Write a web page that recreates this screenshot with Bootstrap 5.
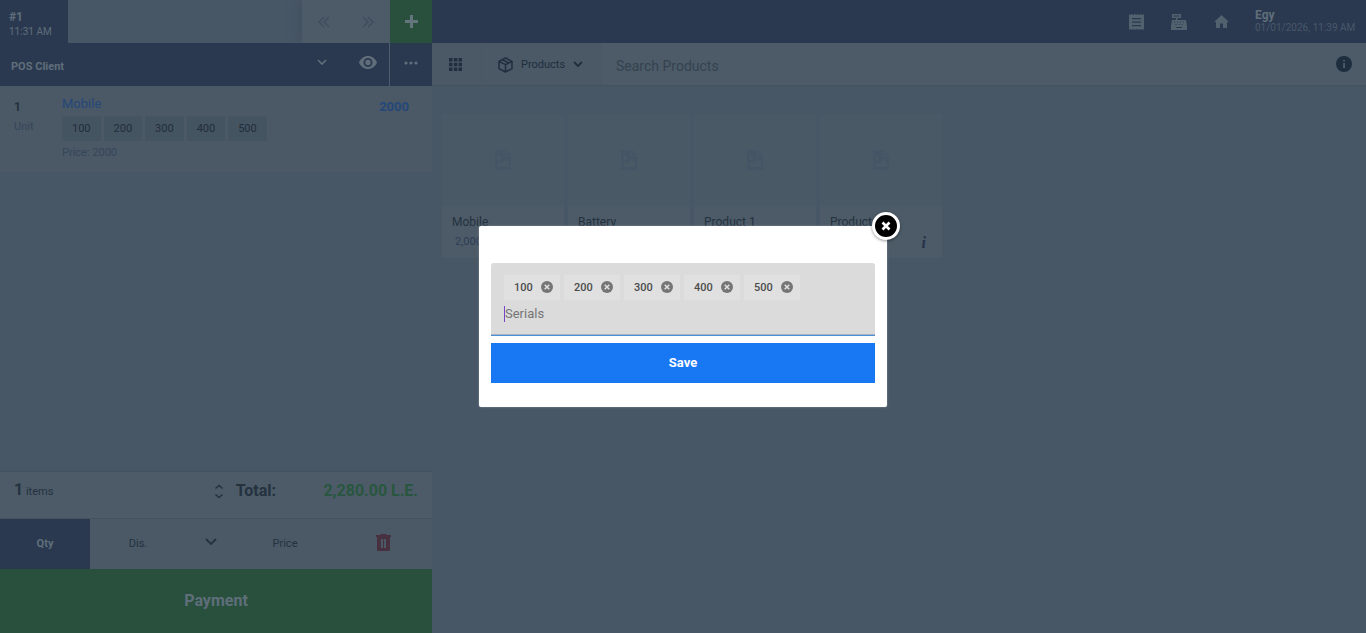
<!DOCTYPE html>
<html lang="en">
<head>
<meta charset="utf-8">
<meta name="viewport" content="width=device-width, initial-scale=1">
<title>POS</title>
<link rel="stylesheet" href="https://cdn.jsdelivr.net/npm/bootstrap@5.3.0/dist/css/bootstrap.min.css">
<style>
  :root {
    --navy: #2b3950;
    --panel: #4c5b67;
    --surface: #4a5965;
    --canvas: #485766;
    --green: #28503d;
    --ink: #243240;
    --soft: #5f6e7a;
    --link: #25477a;
    --line: #43525f;
  }
  body { font-family: Roboto, sans-serif; font-size: 12px; line-height: 16px; color: var(--ink); background: var(--canvas); }
  button { border: 0; background: none; padding: 0; color: inherit; font: inherit; }
  svg { display: block; fill: currentColor; }
  .stroke { fill: none; stroke: currentColor; stroke-width: 2; }
  .bar { height: 43px; flex: none; }
  .navy { background: var(--navy); color: var(--soft); }
  .order { flex: 0 0 27rem; background: var(--canvas); }
  .session { width: 68px; padding: 9px 9px 5px; }
  .session span, .who span { font-size: 10px; line-height: 14px; }
  .pager { width: 88px; background: var(--panel); color: #3e4d5e; box-shadow: -4px 0 8px #43525f; }
  .add { width: 42px; background: var(--green); color: #65757d; }
  .client { border-right: 1px solid #4f5e6d; padding-left: 11px; }
  .client-name { font-size: 11px; }
  .menu-btn { width: 42px; }
  .line-item { background: var(--surface); height: 87px; padding: 8px 23px 0 14px; border-bottom: 1px solid var(--canvas); }
  .qty { width: 48px; padding-top: 5px; }
  .muted { color: #35455a; font-size: 11px; }
  .serials { gap: 3px; }
  .serial { background: #455461; color: #212e3b; font-size: 11px; padding: 5px 10px 4px; }
  .name { height: 22px; font-size: 13px; line-height: 20px; color: var(--link); }
  .amount { font-size: 13px; padding-top: 5px; color: var(--link); }
  .totals { background: var(--panel); height: 48px; border-top: 1px solid var(--line); border-bottom: 1px solid var(--line); padding: 0 14px 8px; font-size: 11px; }
  .big { font-size: 16px; }
  .sum { width: 142px; color: #28563f; }
  .keys { background: var(--surface); height: 50px; font-size: 11px; }
  .key-qty { width: 90px; background: var(--navy); color: var(--soft); }
  .key-dis { width: 96px; }
  .key-type { width: 50px; }
  .key-price { width: 98px; }
  .key-del { color: #47303f; }
  .pay { height: 64px; background: var(--green); color: var(--soft); font-size: 16px; }
  .top-nav { gap: 27px; margin-right: 10px; color: #51616d; }
  .who { width: 127px; padding: 8px 0 0 16px; }
  .who span { color: #485868; white-space: nowrap; }
  .tools { background: var(--panel); border-bottom: 1px solid var(--line); }
  .tile-btn { width: 50px; background: var(--surface); color: #202e3f; border-right: 1px solid var(--canvas); padding-left: 17px; }
  .kind { width: 120px; background: var(--surface); font-size: 11px; padding: 1px 0 0 16px; color: #202e3f; }
  .find { background: transparent; border: 0; outline: 0; font-size: 14px; color: var(--ink); padding: 3px 14px 0; }
  .find::placeholder { color: #35424f; opacity: 1; }
  .about { color: #1e2e3e; padding: 0 14px; }
  .goods { padding: 28px 10px; gap: 4px; }
  .product { width: 122px; background: var(--panel); }
  .thumb { height: 92px; background: #4a5966; color: #465565; }
  .desc { height: 52px; padding: 7px 10px; }
  .desc h2 { font-size: 12px; line-height: 18px; margin: 0; font-weight: 400; }
  .price { font-size: 11px; padding: 3px 0 0 3px; color: #2e3d55; }
  .more { font: italic 700 16px/24px "Liberation Serif", serif; color: #26324a; padding-right: 6px; }
  .overlay { inset: 0; }
  .dialog-box { width: 408px; background: #fff; padding: 37px 12px 24px; border-radius: 2px; box-shadow: 0 0 2px #8d96a0; }
  .close-btn { top: -14px; right: -13px; width: 28px; height: 28px; border-radius: 50%; background: #000; border: 3px solid #fff; color: #fff; box-shadow: 0 1px 3px #0006; }
  .field { background: #dbdbdb; border-bottom: 1px solid #4a8fdc; box-shadow: inset 0 -1px #a9b4c1; border-radius: 3px 3px 0 0; padding: 12px 13px 13px; }
  .chips { gap: 4px; margin-bottom: 6px; }
  .chip { background: #e0e0e0; color: #4c4c4c; font-size: 11px; height: 25px; padding-left: 10px; width: 56px; }
  .chip button { color: #757575; padding: 0 7px 1px 0; }
  .serial-input { border: 0; border-left: 1px solid #7346c8; outline: 0; background: transparent; font-size: 13px; line-height: 16px; height: 16px; padding: 0; display: block; }
  .serial-input::placeholder { color: #757575; opacity: 1; }
  .save { background: #1877f2; color: #fff; height: 40px; font-size: 13px; margin-top: 7px; }
</style>
</head>
<body>
<svg class="d-none">
  <symbol id="noimg" viewBox="0 0 16 20"><path d="M1 0h9v6h6v13a1 1 0 0 1-1 1H1a1 1 0 0 1-1-1V1a1 1 0 0 1 1-1zm10 0 5 5h-5zM3 17h11v-5l-3-3-5 5-2-2-1 1zM4 6a2 2 0 1 0 .1 0z" fill-rule="evenodd"/></symbol>
  <symbol id="chipx" viewBox="0 0 12 12"><circle cx="6" cy="6" r="6"/><path d="m3.700 3.700 4.600 4.600m0-4.600L3.700 8.300" stroke="#e0e0e0" stroke-width="1.500"/></symbol>
</svg>

<div class="d-flex vh-100 overflow-hidden">
  <section class="order d-flex flex-column">
    <div class="bar d-flex">
      <button class="session navy text-start"><b class="d-block lh-1 mb-1">#1</b><span class="d-block lh-1">11:31 AM</span></button>
      <div class="flex-grow-1"></div>
      <div class="pager d-flex">
        <button class="flex-fill d-flex align-items-center justify-content-center" aria-label="Previous"><svg class="stroke" width="12" height="12"><path d="M6 1 1 6l5 5M11 1 6 6l5 5" stroke-width="1.400"/></svg></button>
        <button class="flex-fill d-flex align-items-center justify-content-center" aria-label="Next"><svg class="stroke" width="12" height="12"><path d="m1 1 5 5-5 5M6 1l5 5-5 5" stroke-width="1.400"/></svg></button>
      </div>
      <button class="add d-flex align-items-center justify-content-center" aria-label="Add order"><svg width="13" height="13"><path d="M5 0h3v5h5v3H8v5H5V8H0V5h5z"/></svg></button>
    </div>
    <div class="bar navy d-flex">
      <div class="client flex-grow-1 d-flex align-items-center">
        <b class="client-name flex-grow-1 pt-1">POS Client</b>
        <button class="px-3 me-3 pb-1" aria-label="Choose client"><svg class="stroke" width="10" height="7"><path d="m1 1 4 4 4-4" stroke-width="1.700"/></svg></button>
        <button class="pb-1 pe-2 me-1" aria-label="View client"><svg width="18" height="13"><path fill-rule="evenodd" d="M9 0c4 0 7.300 2.500 9 6.500C16.300 10.500 13 13 9 13S1.700 10.500 0 6.500C1.700 2.500 5 0 9 0zm0 2a4.500 4.500 0 1 0 0 9 4.500 4.500 0 0 0 0-9zm0 1.800a2.700 2.700 0 1 1 0 5.400 2.700 2.700 0 0 1 0-5.400z"/></svg></button>
      </div>
      <button class="menu-btn d-flex align-items-center justify-content-center pb-1" aria-label="More"><svg width="14" height="4"><circle cx="2" cy="2" r="1.600"/><circle cx="7" cy="2" r="1.600"/><circle cx="12" cy="2" r="1.600"/></svg></button>
    </div>
    <article class="line-item d-flex">
      <div class="qty"><b class="d-block">1</b><span class="muted d-block pt-1">Unit</span></div>
      <div class="flex-grow-1">
        <div class="name">Mobile</div>
        <div class="serials d-flex"><span class="serial">100</span><span class="serial">200</span><span class="serial">300</span><span class="serial">400</span><span class="serial">500</span></div>
        <div class="muted pt-1">Price: 2000</div>
      </div>
      <b class="amount">2000</b>
    </article>
    <div class="flex-grow-1"></div>
    <div class="totals d-flex align-items-center">
      <div class="flex-grow-1"><b class="big">1</b> items</div>
      <button class="me-2 pe-1" aria-label="Expand totals"><svg class="stroke" width="10" height="15"><path d="m1.500 4.500 3.500-3 3.500 3M1.500 10.500l3.500 3 3.500-3" stroke-width="1.500"/></svg></button>
      <div class="big fw-bold">Total:</div>
      <div class="sum big fw-bold text-end">2,280.00 L.E.</div>
    </div>
    <div class="keys d-flex">
      <button class="key-qty fw-bold">Qty</button>
      <button class="key-dis">Dis.</button>
      <button class="key-type d-flex align-items-center justify-content-center pb-1" aria-label="Discount type"><svg class="stroke" width="12" height="8"><path d="m1 1 5 5 5-5" stroke-width="1.800"/></svg></button>
      <button class="key-price">Price</button>
      <button class="key-del flex-grow-1 d-flex align-items-center justify-content-center pb-1" aria-label="Delete"><svg width="15" height="17"><path fill-rule="evenodd" d="M5 0h5l1 1h4v2H0V1h4zM1 3h13v13a1 1 0 0 1-1 1H2a1 1 0 0 1-1-1zm4 2v9h2V5zm3 0v9h2V5z"/></svg></button>
    </div>
    <button class="pay fw-bold">Payment</button>
  </section>

  <main class="flex-grow-1 d-flex flex-column">
    <header class="bar navy d-flex justify-content-end">
      <nav class="top-nav d-flex align-items-center">
        <a href="#" class="text-reset" aria-label="Orders"><svg width="15" height="16"><path fill-rule="evenodd" d="m0 0 1.500 1L3 0l1.500 1L6 0l1.500 1L9 0l1.500 1L12 0l1.500 1L15 0v16l-1.500-1-1.500 1-1.500-1L9 16l-1.500-1L6 16l-1.500-1L3 16l-1.500-1L0 16zM3 4v1.200h9V4zm0 3.500v1.200h9V7.500zM3 11v1.200h9V11z"/></svg></a>
        <a href="#" class="text-reset" aria-label="Register"><svg width="16" height="16"><path fill-rule="evenodd" d="M1 0h9v4H6.500v2H15l1 6v4H0v-4l1-6h4V4H1zm1.500 1.500v1h6v-1zM3 7.500v1h1v-1zm3 0v1h1v-1zm3 0v1h1v-1zm3 0v1h1v-1zM4.500 10v1h1v-1zm3 0v1h1v-1zm3 0v1h1v-1zM5 13v1h6v-1z"/></svg></a>
        <a href="#" class="text-reset" aria-label="Home"><svg width="15" height="13"><path d="m7.500 0 7.500 7h-2v6H9V8.500H6V13H2V7H0z"/></svg></a>
      </nav>
      <div class="who"><b class="d-block lh-sm">Egy</b><span class="d-block lh-1">01/01/2026, 11:39 AM</span></div>
    </header>
    <div class="bar tools d-flex">
      <button class="tile-btn" aria-label="Grid view"><svg width="13" height="13"><path d="M0 0h3.500v3.500H0zm4.800 0h3.500v3.500H4.800zm4.700 0H13v3.500H9.500zM0 4.800h3.500v3.500H0zm4.800 0h3.500v3.500H4.800zm4.700 0H13v3.500H9.500zM0 9.500h3.500V13H0zm4.800 0h3.500V13H4.800zm4.700 0H13V13H9.500z"/></svg></button>
      <button class="kind d-flex align-items-center"><svg class="stroke" width="15" height="16" stroke-linejoin="round"><path d="m7.500 1 6.500 3.300v7.400L7.500 15 1 11.700V4.300zM1 4.300l6.500 3.400L14 4.300M7.500 7.700V15M4.200 2.700 10.700 6" stroke-width="1.500"/></svg><span class="ms-2">Products</span><svg class="stroke ms-2" width="10" height="7"><path d="m1 1 4 4 4-4" stroke-width="1.800"/></svg></button>
      <input class="find flex-grow-1" type="search" placeholder="Search Products" aria-label="Search Products">
      <button class="about" aria-label="Info"><svg width="16" height="16"><circle cx="8" cy="8" r="8"/><path d="M7.300 7h1.500v5H7.300zm0-3h1.500v1.500H7.300z" fill="#586672"/></svg></button>
    </div>
    <div class="goods d-flex flex-wrap">
      <article class="product"><div class="thumb d-flex align-items-center justify-content-center"><svg width="16" height="20"><use href="#noimg"/></svg></div><div class="desc"><h2>Mobile</h2><div class="price">2,000.00</div></div></article>
      <article class="product"><div class="thumb d-flex align-items-center justify-content-center"><svg width="16" height="20"><use href="#noimg"/></svg></div><div class="desc"><h2>Battery</h2></div></article>
      <article class="product"><div class="thumb d-flex align-items-center justify-content-center"><svg width="16" height="20"><use href="#noimg"/></svg></div><div class="desc"><h2>Product 1</h2></div></article>
      <article class="product"><div class="thumb d-flex align-items-center justify-content-center"><svg width="16" height="20"><use href="#noimg"/></svg></div><div class="desc"><h2>Product 2</h2><div class="more text-end">i</div></div></article>
    </div>
  </main>
</div>

<div class="overlay position-fixed d-flex align-items-center justify-content-center">
  <div class="dialog-box position-relative" role="dialog" aria-label="Serials">
    <button class="close-btn position-absolute d-flex align-items-center justify-content-center" aria-label="Close"><svg class="stroke" width="10" height="10"><path d="m1.500 1.500 7 7m0-7-7 7" stroke-width="2.600"/></svg></button>
    <div class="field">
      <div class="chips d-flex">
        <div class="chip d-flex align-items-center justify-content-between fw-medium">100<button aria-label="Remove 100"><svg width="12" height="12"><use href="#chipx"/></svg></button></div>
        <div class="chip d-flex align-items-center justify-content-between fw-medium">200<button aria-label="Remove 200"><svg width="12" height="12"><use href="#chipx"/></svg></button></div>
        <div class="chip d-flex align-items-center justify-content-between fw-medium">300<button aria-label="Remove 300"><svg width="12" height="12"><use href="#chipx"/></svg></button></div>
        <div class="chip d-flex align-items-center justify-content-between fw-medium">400<button aria-label="Remove 400"><svg width="12" height="12"><use href="#chipx"/></svg></button></div>
        <div class="chip d-flex align-items-center justify-content-between fw-medium">500<button aria-label="Remove 500"><svg width="12" height="12"><use href="#chipx"/></svg></button></div>
      </div>
      <input class="serial-input w-100" type="text" placeholder="Serials" aria-label="Serials">
    </div>
    <button class="save w-100 fw-bold">Save</button>
  </div>
</div>
<script src="https://cdn.jsdelivr.net/npm/bootstrap@5.3.0/dist/js/bootstrap.bundle.min.js"></script>
</body>
</html>
